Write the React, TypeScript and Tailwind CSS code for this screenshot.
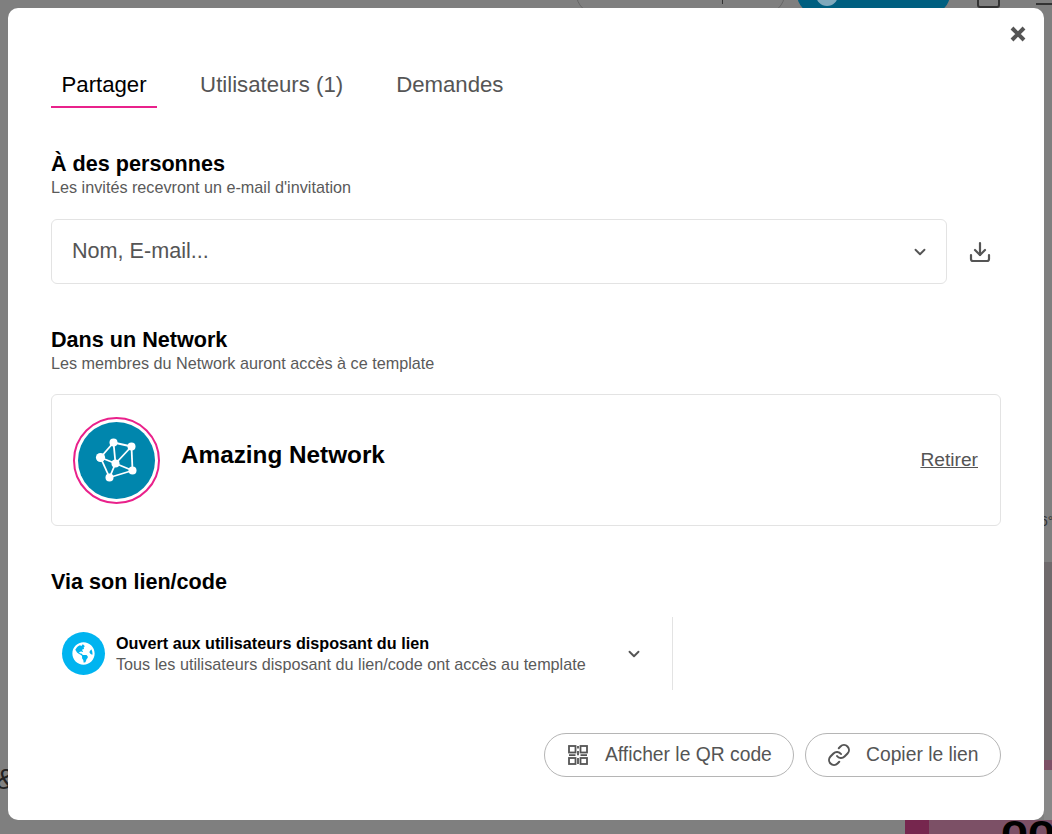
import { ChevronDown, Download, Link } from "lucide-react";
import { FaGlobeAmericas } from "react-icons/fa";

function NetworkIcon() {
  const pts: [number, number][] = [[21.5, 7.5], [39.5, 11.5], [8.5, 22.5], [23.5, 28.5], [40.5, 35.5], [17.5, 42.5]];
  const lines = [[0, 1], [0, 2], [0, 3], [1, 3], [1, 4], [2, 3], [2, 5], [3, 4], [3, 5], [4, 5]];
  return (
    <svg width="50" height="50" viewBox="0 0 50 50" fill="none">
      {lines.map(([a, b], i) => (
        <line key={i} x1={pts[a][0]} y1={pts[a][1]} x2={pts[b][0]} y2={pts[b][1]} stroke="#fff" strokeWidth="1.8" />
      ))}
      {pts.map(([x, y], i) => (
        <circle key={i} cx={x} cy={y} r={i === 2 ? 4.6 : 4} fill="#fff" />
      ))}
    </svg>
  );
}

function QrIcon() {
  return (
    <svg width="20" height="20" viewBox="0 0 20 20" fill="none" stroke="#555" strokeWidth="1.800">
      <rect x="1" y="1" width="6.500" height="6.500" />
      <rect x="12.500" y="1" width="6.500" height="6.500" />
      <rect x="1" y="13" width="6.500" height="6" />
      <rect x="12.500" y="13" width="6.500" height="6" />
      <path d="M1 10.200h6.500M12.500 10.200h6.500M10 1v2.500M10 6v4.200M10 13v6" />
    </svg>
  );
}

function CloseIcon() {
  return (
    <svg width="16" height="16" viewBox="0 0 16 16" fill="none" stroke="#555" strokeWidth="4">
      <path d="M2 2l12 12M14 2L2 14" />
    </svg>
  );
}

export default function App() {
  return (
    <div className="relative h-[834px] w-[1052px] overflow-hidden bg-[#7f7f7f] font-['Liberation_Sans',Arial,sans-serif]">
      <div className="absolute left-[576px] top-[-26px] h-[40px] w-[209px] rounded-full border border-[#666]" />
      <div className="absolute left-[722px] top-0 h-[4px] w-[1px] bg-[#333]" />
      <div className="absolute left-[797px] top-[-26px] h-[40px] w-[153px] rounded-full bg-[#005f80]" />
      <div className="absolute left-[816px] top-[-16px] h-[22px] w-[22px] rounded-full bg-[#80a9bc]" />
      <div className="absolute left-[977px] top-[-6px] h-[14px] w-[23px] rounded-[3px] border-2 border-[#333]" />
      <div className="absolute left-[1036px] top-[3px] h-[2px] w-[16px] bg-[#333]" />
      <div className="absolute bottom-0 left-[1044px] top-[562px] w-[8px] bg-[#6f6a6c]" />
      <div className="absolute left-[1044px] top-[760px] h-[10px] w-[8px] bg-[#7c5066]" />
      <div className="absolute left-[1044px] top-[770px] h-[50px] w-[8px] bg-[#888]" />
      <div className="absolute bottom-0 left-[905px] h-[14px] w-[147px] bg-[#7c5066]" />
      <div className="absolute bottom-0 left-[905px] h-[14px] w-[24px] bg-[#76264e]" />
      <div className="absolute left-[1001px] top-[808px] text-[44px] font-bold leading-none text-black">oo</div>
      <div className="absolute left-[-4px] top-[764px] text-[30px] leading-none text-[#222]">&amp;</div>
      <div className="absolute left-[1040px] top-[514px] text-[14px] leading-none text-[#333]">6°</div>

      <div className="absolute left-[8px] top-[8px] flex h-[812px] w-[1036px] flex-col rounded-[10px] bg-white px-[43px]">
        <button className="absolute right-[18px] top-[18px]">
          <CloseIcon />
        </button>

        <div className="mt-[54px] flex h-[46px] text-[22.200px] leading-[46px] text-[#555]">
          <div className="border-b-2 border-[#e9218b] px-[10.500px] text-black">Partager</div>
          <div className="ml-[32px] px-[11px]">Utilisateurs (1)</div>
          <div className="ml-[31px] px-[11px]">Demandes</div>
        </div>

        <h2 className="mt-[43px] text-[21.600px] font-bold leading-[26px] text-black">À des personnes</h2>
        <p className="text-[16.200px] leading-[20px] text-[#5a5a5a]">Les invités recevront un e-mail d'invitation</p>

        <div className="mt-[22px] flex items-center">
          <div className="flex h-[65px] w-[896px] items-center justify-between rounded-[6px] border border-[#e3e3e3] pl-[20px] pr-[17px] text-[21.600px] text-[#555]">
            <span>Nom, E-mail...</span>
            <ChevronDown size={18} strokeWidth={2.500} />
          </div>
          <Download className="ml-[21px] text-[#555]" size={24} strokeWidth={2.200} />
        </div>

        <h2 className="mt-[43px] text-[21.600px] font-bold leading-[26px] text-black">Dans un Network</h2>
        <p className="text-[16.200px] leading-[20px] text-[#5a5a5a]">Les membres du Network auront accès à ce template</p>

        <div className="mt-[21px] flex h-[132px] items-center justify-between rounded-[6px] border border-[#e3e3e3] pl-[21px] pr-[22px]">
          <div className="flex items-center">
            <div className="flex h-[87px] w-[87px] items-center justify-center rounded-full border-2 border-[#e9218b]">
              <div className="flex h-[77px] w-[77px] items-center justify-center rounded-full bg-[#0086ad]">
                <NetworkIcon />
              </div>
            </div>
            <span className="mb-[10px] ml-[21px] text-[24.300px] font-bold text-black">Amazing Network</span>
          </div>
          <span className="mt-[1px] text-[19.200px] text-[#555] underline">Retirer</span>
        </div>

        <h2 className="mt-[43px] text-[21.600px] font-bold leading-[26px] text-black">Via son lien/code</h2>

        <div className="mt-[22px] flex h-[73px] w-[622px] items-center border-r border-[#e3e3e3] pl-[11px]">
          <div className="flex h-[43px] w-[43px] items-center justify-center rounded-full bg-[#00b4f0]">
            <FaGlobeAmericas color="#fff" size={23} />
          </div>
          <div className="ml-[11px]">
            <div className="mb-[1px] text-[16.200px] font-bold leading-[20px] text-black">Ouvert aux utilisateurs disposant du lien</div>
            <div className="text-[16.200px] leading-[21px] text-[#5a5a5a]">Tous les utilisateurs disposant du lien/code ont accès au template</div>
          </div>
          <ChevronDown className="ml-[39px] text-[#555]" size={18} strokeWidth={2.500} />
        </div>

        <div className="mt-[43px] flex justify-end gap-[11px]">
          <button className="flex h-[44px] w-[250px] items-center gap-[17px] rounded-full border border-[#b5b5b5] pl-[23px] text-[19.300px] text-[#555]">
            <QrIcon />
            Afficher le QR code
          </button>
          <button className="flex h-[44px] w-[196px] items-center gap-[15px] rounded-full border border-[#b5b5b5] pl-[21px] text-[19.300px] text-[#555]">
            <Link size={24} strokeWidth={2} />
            Copier le lien
          </button>
        </div>
      </div>
    </div>
  );
}
